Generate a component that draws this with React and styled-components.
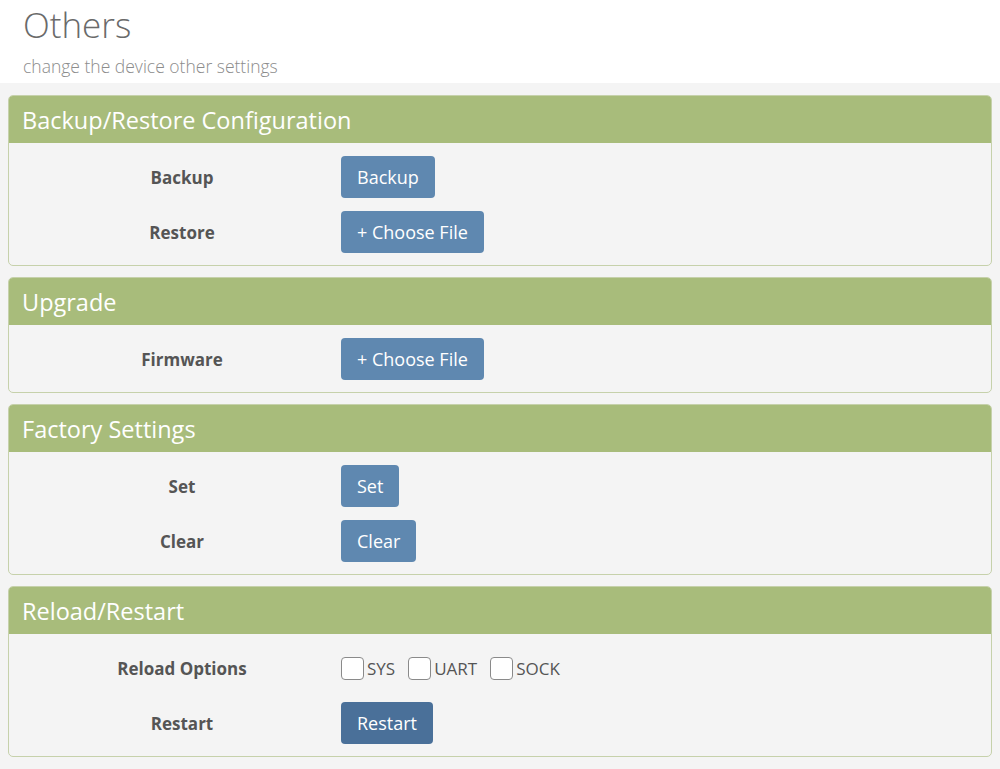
import React from "react";
import styled, { createGlobalStyle } from "styled-components";

const GlobalStyle = createGlobalStyle`
  html, body {
    margin: 0;
    padding: 0;
    background: #f4f4f4;
    font-family: "Open Sans", "Noto Sans", sans-serif;
  }
`;

const StyledPage = styled.div`
  min-height: 769px;
  background: #f4f4f4;
`;

const StyledHeading = styled.div`
  background: #ffffff;
  padding: 2px 23px 4px;
`;

const StyledTitle = styled.h1`
  margin: 0;
  font-size: 35px;
  font-weight: 300;
  color: #6a6a6a;
  line-height: 46px;
`;

const StyledSubtitle = styled.div`
  margin-top: 5px;
  font-size: 17.5px;
  font-weight: 300;
  color: #8c8c8c;
  line-height: 26px;
`;

const StyledPanels = styled.div`
  display: flex;
  flex-direction: column;
  gap: 11px;
  padding: 12px 8px 0;
`;

const StyledPanel = styled.section`
  border: 1px solid #c6d1ab;
  border-radius: 5px;
  overflow: hidden;
  background: #f4f4f4;
`;

const StyledPanelHeader = styled.h2`
  margin: 0;
  height: 47px;
  display: flex;
  align-items: center;
  padding: 0 13px;
  background: #a8bc7b;
  color: #ffffff;
  font-size: 23.5px;
  font-weight: 400;
`;

const StyledPanelBody = styled.div`
  display: flex;
  flex-direction: column;
  gap: 13px;
  padding: 13px 14px 12px;
`;

const StyledRow = styled.div`
  display: grid;
  grid-template-columns: 318px 1fr;
  align-items: center;
  min-height: 42px;
`;

const StyledLabel = styled.div`
  text-align: center;
  font-size: 17px;
  font-weight: 700;
  color: #555555;
`;

const StyledButton = styled.button`
  justify-self: start;
  height: 42px;
  padding: 0 16px;
  border: none;
  border-radius: 4px;
  background: ${(p) => (p.$active ? "#4a7099" : "#5f88b0")};
  color: #ffffff;
  font-family: "Open Sans", "Noto Sans", sans-serif;
  font-size: 18px;
  cursor: pointer;
`;

const StyledChecks = styled.div`
  display: flex;
  align-items: center;
  gap: 13px;
`;

const StyledCheck = styled.label`
  display: flex;
  align-items: center;
  font-size: 17px;
  color: #555555;
`;

const StyledBox = styled.span`
  width: 21px;
  height: 21px;
  border: 1px solid #8a8a8a;
  border-radius: 4px;
  background: #ffffff;
  margin-right: 3px;
`;

function Row({ label, children }) {
  return (
    <StyledRow>
      <StyledLabel>{label}</StyledLabel>
      {children}
    </StyledRow>
  );
}

function Panel({ title, children }) {
  return (
    <StyledPanel>
      <StyledPanelHeader>{title}</StyledPanelHeader>
      <StyledPanelBody>{children}</StyledPanelBody>
    </StyledPanel>
  );
}

export default function App() {
  return (
    <StyledPage>
      <GlobalStyle />
      <StyledHeading>
        <StyledTitle>Others</StyledTitle>
        <StyledSubtitle>change the device other settings</StyledSubtitle>
      </StyledHeading>
      <StyledPanels>
        <Panel title="Backup/Restore Configuration">
          <Row label="Backup">
            <StyledButton>Backup</StyledButton>
          </Row>
          <Row label="Restore">
            <StyledButton>+ Choose File</StyledButton>
          </Row>
        </Panel>
        <Panel title="Upgrade">
          <Row label="Firmware">
            <StyledButton>+ Choose File</StyledButton>
          </Row>
        </Panel>
        <Panel title="Factory Settings">
          <Row label="Set">
            <StyledButton>Set</StyledButton>
          </Row>
          <Row label="Clear">
            <StyledButton>Clear</StyledButton>
          </Row>
        </Panel>
        <Panel title="Reload/Restart">
          <Row label="Reload Options">
            <StyledChecks>
              <StyledCheck><StyledBox />SYS</StyledCheck>
              <StyledCheck><StyledBox />UART</StyledCheck>
              <StyledCheck><StyledBox />SOCK</StyledCheck>
            </StyledChecks>
          </Row>
          <Row label="Restart">
            <StyledButton $active>Restart</StyledButton>
          </Row>
        </Panel>
      </StyledPanels>
    </StyledPage>
  );
}
